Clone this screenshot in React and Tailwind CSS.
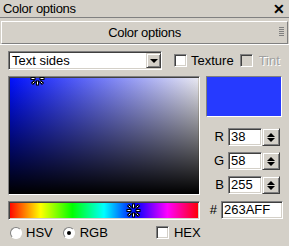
import React from "react";

const sunken =
  "border border-t-[#808080] border-l-[#808080] border-b-white border-r-white shadow-[inset_1px_1px_0_#404040,inset_-1px_-1px_0_#d4d0c8]";
const raised =
  "border border-t-[#d4d0c8] border-l-[#d4d0c8] border-b-[#404040] border-r-[#404040] shadow-[inset_1px_1px_0_#ffffff,inset_-1px_-1px_0_#808080]";

const Marker = ({ className }) => (
  <svg width="15" height="15" viewBox="0 0 15 15" className={className}>
    <g stroke="#000" strokeWidth="3" strokeLinecap="square">
      <path d="M7.5 2v2M7.5 11v2M2 7.5h2M11 7.5h2M3 3l1 1M12 3l-1 1M3 12l1-1M12 12l-1-1" />
    </g>
    <g stroke="#fff" strokeWidth="1" strokeLinecap="square">
      <path d="M7.5 2v2M7.5 11v2M2 7.5h2M11 7.5h2M3 3l1 1M12 3l-1 1M3 12l1-1M12 12l-1-1" />
    </g>
  </svg>
);

const Check = ({ disabled }) => (
  <span
    className={`inline-block w-[13px] h-[13px] ${sunken} ${disabled ? "bg-[#d4d0c8]" : "bg-white"}`}
  />
);

const Radio = ({ checked }) => (
  <span className="relative inline-flex w-[12px] h-[12px] rounded-full bg-white border border-t-[#808080] border-l-[#808080] border-b-white border-r-white items-center justify-center">
    {checked && <span className="w-[4px] h-[4px] rounded-full bg-black" />}
  </span>
);

const Spinner = () => (
  <div className={`w-[18px] h-[18px] bg-[#d4d0c8] ${raised} flex flex-col items-center justify-center gap-[1px]`}>
    <span className="w-0 h-0 border-l-[4px] border-r-[4px] border-b-[4px] border-l-transparent border-r-transparent border-b-black" />
    <span className="w-0 h-0 border-l-[4px] border-r-[4px] border-t-[4px] border-l-transparent border-r-transparent border-t-black" />
  </div>
);

const NumRow = ({ label, value }) => (
  <div className="flex items-center h-[18px]">
    <span className="w-[22px] text-right pr-[4px]">{label}</span>
    <div className={`w-[34px] h-[18px] bg-white ${sunken} flex items-center px-[2px]`}>
      {value}
    </div>
    <Spinner />
  </div>
);

export default function App() {
  return (
    <div
      className="w-[289px] h-[246px] bg-[#d4d0c8] text-black overflow-hidden text-[13px]"
      style={{ fontFamily: '"Liberation Sans", Arial, sans-serif' }}
    >
      <div className="h-[18px] flex items-center justify-between pl-[3px] pr-[4px] border-b border-[#808080]">
        <span className="tracking-[-0.3px]">Color options</span>
        <span className="font-bold text-[14px] leading-none">✕</span>
      </div>
      <div className="mt-[3px] mx-[1px] h-[23px] relative flex items-center justify-center border border-t-white border-l-white border-b-[#808080] border-r-[#808080]">
        <span className="tracking-[-0.3px]">Color options</span>
        <div className="absolute right-[3px] top-[5px] flex flex-col gap-[1px]">
          {[0, 1, 2, 3, 4].map((i) => (
            <span key={i} className="block w-[5px] h-[1px] bg-[#808080]" />
          ))}
        </div>
      </div>
      <div className="border-t border-white px-[8px] pt-[6px]">
        <div className="flex items-center h-[19px]">
          <div className={`w-[154px] h-[19px] bg-white ${sunken} flex items-center justify-between pl-[3px]`}>
            <span>Text sides</span>
            <div className={`w-[15px] h-[15px] bg-[#d4d0c8] ${raised} flex items-center justify-center`}>
              <span className="w-0 h-0 border-l-[4px] border-r-[4px] border-t-[4px] border-l-transparent border-r-transparent border-t-black" />
            </div>
          </div>
          <span className="ml-[12px] flex"><Check /></span>
          <span className="ml-[4px]">Texture</span>
          <span className="ml-[6px] flex"><Check disabled /></span>
          <span className="ml-[6px] text-[#a0a0a0] [text-shadow:1px_1px_0_#fff]">Tint</span>
        </div>
        <div className="flex mt-[6px] gap-[6px]">
          <div className="w-[192px] flex flex-col">
            <div className={`relative h-[119px] overflow-hidden ${sunken} bg-[linear-gradient(to_right,#0010ff,#ececf4)]`}>
              <div className="absolute inset-0 bg-[linear-gradient(to_bottom,transparent,#000)]" />
              <Marker className="absolute left-[21px] top-[-6px]" />
            </div>
            <div className={`relative mt-[6px] h-[19px] ${sunken} bg-[linear-gradient(to_right,#ff0000,#ffff00,#00ff00,#00ffff,#0000ff,#ff00ff,#ff0000)]`}>
              <Marker className="absolute left-[117px] top-[1px]" />
            </div>
            <div className="flex items-center mt-[6px] h-[13px]">
              <span className="ml-[2px] flex"><Radio /></span>
              <span className="ml-[4px]">HSV</span>
              <span className="ml-[10px] flex"><Radio checked /></span>
              <span className="ml-[5px]">RGB</span>
              <span className="ml-[48px] flex"><Check /></span>
              <span className="ml-[5px]">HEX</span>
            </div>
          </div>
          <div className="w-[77px] flex flex-col">
            <div className="w-[76px] h-[41px] bg-[#263aff] border border-t-[#808080] border-l-[#808080] border-b-white border-r-white" />
            <div className="mt-[11px] flex flex-col gap-[6px]">
              <NumRow label="R" value="38" />
              <NumRow label="G" value="58" />
              <NumRow label="B" value="255" />
            </div>
            <div className="flex items-center h-[18px] mt-[7px]">
              <span className="w-[15px] text-right pr-[4px]">#</span>
              <div className={`w-[62px] h-[18px] bg-white ${sunken} flex items-center px-[2px]`}>
                263AFF
              </div>
            </div>
          </div>
        </div>
      </div>
    </div>
  );
}
